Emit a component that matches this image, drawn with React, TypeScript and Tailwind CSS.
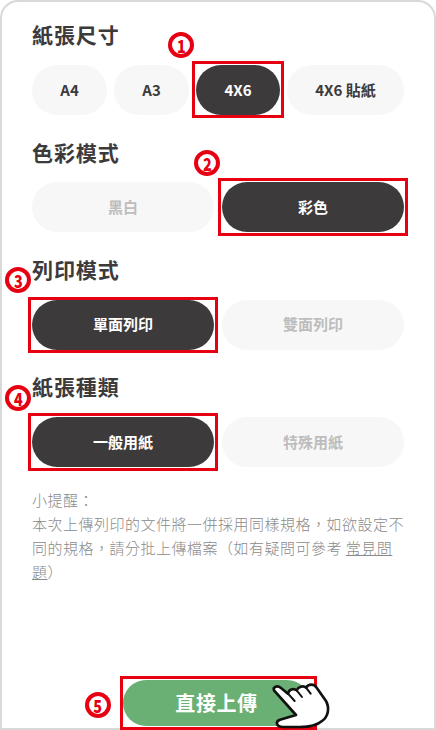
import type { ReactNode } from "react";

const font = { fontFamily: '"Noto Sans CJK TC", "Noto Sans", sans-serif' };

function Pill({ label, active, muted, className = "", children }: { label: string; active?: boolean; muted?: boolean; className?: string; children?: ReactNode }) {
  const tone = active ? "bg-[#3d3a3b] text-white" : muted ? "bg-[#f7f7f7] text-[#bdbdbd]" : "bg-[#f7f7f7] text-[#3d3a3b]";
  return (
    <div className={`relative h-[50px] rounded-full flex items-center justify-center text-[15px] font-bold ${tone} ${className}`}>
      {label}
      {children}
    </div>
  );
}

function Frame({ className = "" }: { className?: string }) {
  return <div className={`absolute border-[3px] border-[#e60012] pointer-events-none ${className}`} />;
}

function Badge({ n, className }: { n: number; className: string }) {
  return (
    <div className={`absolute w-[26px] h-[26px] rounded-full border-[4px] border-[#e60012] bg-white flex items-center justify-center text-[#e60012] text-[18px] font-black leading-none ${className}`}>
      <span className="inline-block scale-x-[0.8]">{n}</span>
    </div>
  );
}

function Section({ title, gap, badge, children }: { title: string; gap: string; badge?: ReactNode; children: ReactNode }) {
  return (
    <section className="relative h-[117.33px]">
      <h2 className="h-[34px] mb-[13px] flex items-center text-[21px] font-bold tracking-[0.9px] text-[#3d3a3b]">{title}</h2>
      <div className={`flex ${gap}`}>{children}</div>
      {badge}
    </section>
  );
}

function Hand() {
  return (
    <svg viewBox="0 0 240 180" className="absolute left-[137px] top-[-9px] w-[80px] h-[60px]">
      <path
        d="M42 58 C38 48 52 42 62 50 L84 68 C86 56 100 50 110 58 C114 48 130 42 138 50 C146 38 162 38 170 50 L198 90 C210 112 204 138 186 150 C170 164 150 168 120 168 L68 168 C50 168 44 152 60 146 L108 132 Z"
        fill="#fff"
        stroke="#111"
        strokeWidth="8"
        strokeLinejoin="round"
      />
      <path d="M84 68 L104 90 M110 58 L126 78 M138 50 L152 68" fill="none" stroke="#111" strokeWidth="6" strokeLinecap="round" />
    </svg>
  );
}

export default function App() {
  return (
    <div style={font} className="relative w-[436px] h-[730px] overflow-hidden bg-white">
      <div className="h-[730px] border-2 border-[#d9d9d9] rounded-t-[18px] px-[30px] pt-[16px] flex flex-col">
        <Section title="紙張尺寸" gap="gap-[7px]" badge={<Badge n={1} className="left-[136px] top-[14px]" />}>
          <Pill label="A4" className="w-[75px]" />
          <Pill label="A3" className="w-[75px]" />
          <Pill label="4X6" active className="w-[84px]">
            <Frame className="-inset-x-1 -top-1 -bottom-[3px]" />
          </Pill>
          <Pill label="4X6 貼紙" className="w-[117px]" />
        </Section>
        <Section title="色彩模式" gap="gap-2" badge={<Badge n={2} className="left-[162px] top-[15px]" />}>
          <Pill label="黑白" muted className="flex-1" />
          <Pill label="彩色" active className="flex-1">
            <Frame className="-inset-1" />
          </Pill>
        </Section>
        <Section title="列印模式" gap="gap-2" badge={<Badge n={3} className="left-[-27px] top-[14px]" />}>
          <Pill label="單面列印" active className="flex-1">
            <Frame className="-inset-x-1 -inset-y-[3px]" />
          </Pill>
          <Pill label="雙面列印" muted className="flex-1" />
        </Section>
        <Section title="紙張種類" gap="gap-2" badge={<Badge n={4} className="left-[-27px] top-[15px]" />}>
          <Pill label="一般用紙" active className="flex-1">
            <Frame className="-inset-1" />
          </Pill>
          <Pill label="特殊用紙" muted className="flex-1" />
        </Section>
        <p className="mt-[1px] text-[15px] leading-[24px] tracking-[0.5px] font-light text-[#8a8a8a]">
          小提醒：<br />
          本次上傳列印的文件將一併採用同樣規格，如欲設定不同的規格，請分批上傳檔案（如有疑問可參考 <span className="underline">常見問題</span>）
        </p>
        <div className="mt-auto mb-[2px] flex justify-center">
          <div className="relative -ml-[3px] w-[187px] h-[46px] rounded-full bg-[#6ab074] text-white text-[20px] font-bold tracking-[0.6px] flex items-center justify-center">
            直接上傳
            <Frame className="-left-[3px] -right-[7px] -top-[4px] -bottom-[4px]" />
            <Badge n={5} className="left-[-38px] top-[12px]" />
            <Hand />
          </div>
        </div>
      </div>
    </div>
  );
}
